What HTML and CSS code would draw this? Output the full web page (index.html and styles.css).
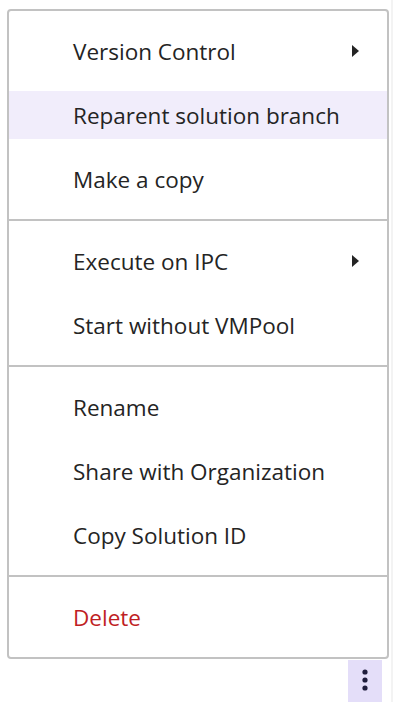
FILE: index.html
```html
<!DOCTYPE html>
<html lang="en">
<head>
    <meta charset="UTF-8">
    <meta name="viewport" content="width=device-width, initial-scale=1.0">
    <title>Solution menu</title>
    <link rel="stylesheet" href="styles.css">
</head>
<body>
    <div class="page">
        <div class="menu">
            <div class="menu-group">
                <div class="menu-item has-sub">Version Control <span class="sub-arrow"></span></div>
                <div class="menu-item hover">Reparent solution branch</div>
                <div class="menu-item">Make a copy</div>
            </div>
            <div class="menu-group">
                <div class="menu-item has-sub">Execute on IPC <span class="sub-arrow"></span></div>
                <div class="menu-item">Start without VMPool</div>
            </div>
            <div class="menu-group">
                <div class="menu-item">Rename</div>
                <div class="menu-item">Share with Organization</div>
                <div class="menu-item">Copy Solution ID</div>
            </div>
            <div class="menu-group">
                <div class="menu-item danger">Delete</div>
            </div>
        </div>

        <div class="trigger-row">
            <button class="more-btn" aria-label="More">
                <svg width="8" height="24" viewBox="0 0 8 24">
                    <circle cx="4" cy="4" r="2.6" fill="#1f1d3d"/>
                    <circle cx="4" cy="12" r="2.6" fill="#1f1d3d"/>
                    <circle cx="4" cy="20" r="2.6" fill="#1f1d3d"/>
                </svg>
            </button>
        </div>
    </div>
</body>
</html>
```

FILE: styles.css
```css
body {
    margin: 0;
    padding: 0;
    background-color: #ffffff;
    font-family: 'Open Sans', 'Noto Sans', sans-serif;
    color: #242424;
}

.page {
    width: 393px;
    height: 702px;
    border-right: 2px solid #f3f3f3;
    padding: 9px 0 0 7px;
    box-sizing: border-box;
    overflow: hidden;
}

.menu {
    width: 382px;
    box-sizing: border-box;
    border: 2px solid #c2c2c2;
    border-radius: 4px;
    background-color: #ffffff;
}

.menu-group {
    display: flex;
    flex-direction: column;
    gap: 16px;
    padding: 16px 0;
    border-top: 2px solid #c2c2c2;
}

.menu-group:first-child {
    border-top: none;
}

.menu-item {
    display: flex;
    align-items: center;
    justify-content: space-between;
    height: 48px;
    padding: 2px 28px 0 64px;
    box-sizing: border-box;
    font-size: 22.5px;
    line-height: 46px;
    white-space: nowrap;
}

.menu-item.hover {
    background-color: #f1edfb;
}

.menu-item.danger {
    color: #bf1e24;
}

.sub-arrow {
    width: 0;
    height: 0;
    margin-top: -2px;
    border-left: 7px solid #242424;
    border-top: 6px solid transparent;
    border-bottom: 6px solid transparent;
}

.trigger-row {
    display: flex;
    justify-content: flex-end;
    width: 382px;
    padding-right: 7px;
    box-sizing: border-box;
}

.more-btn {
    width: 34px;
    height: 44px;
    margin-top: 1px;
    padding: 8px 0 0;
    border: none;
    background-color: #e4def9;
    display: flex;
    justify-content: center;
    align-items: flex-start;
}
```
